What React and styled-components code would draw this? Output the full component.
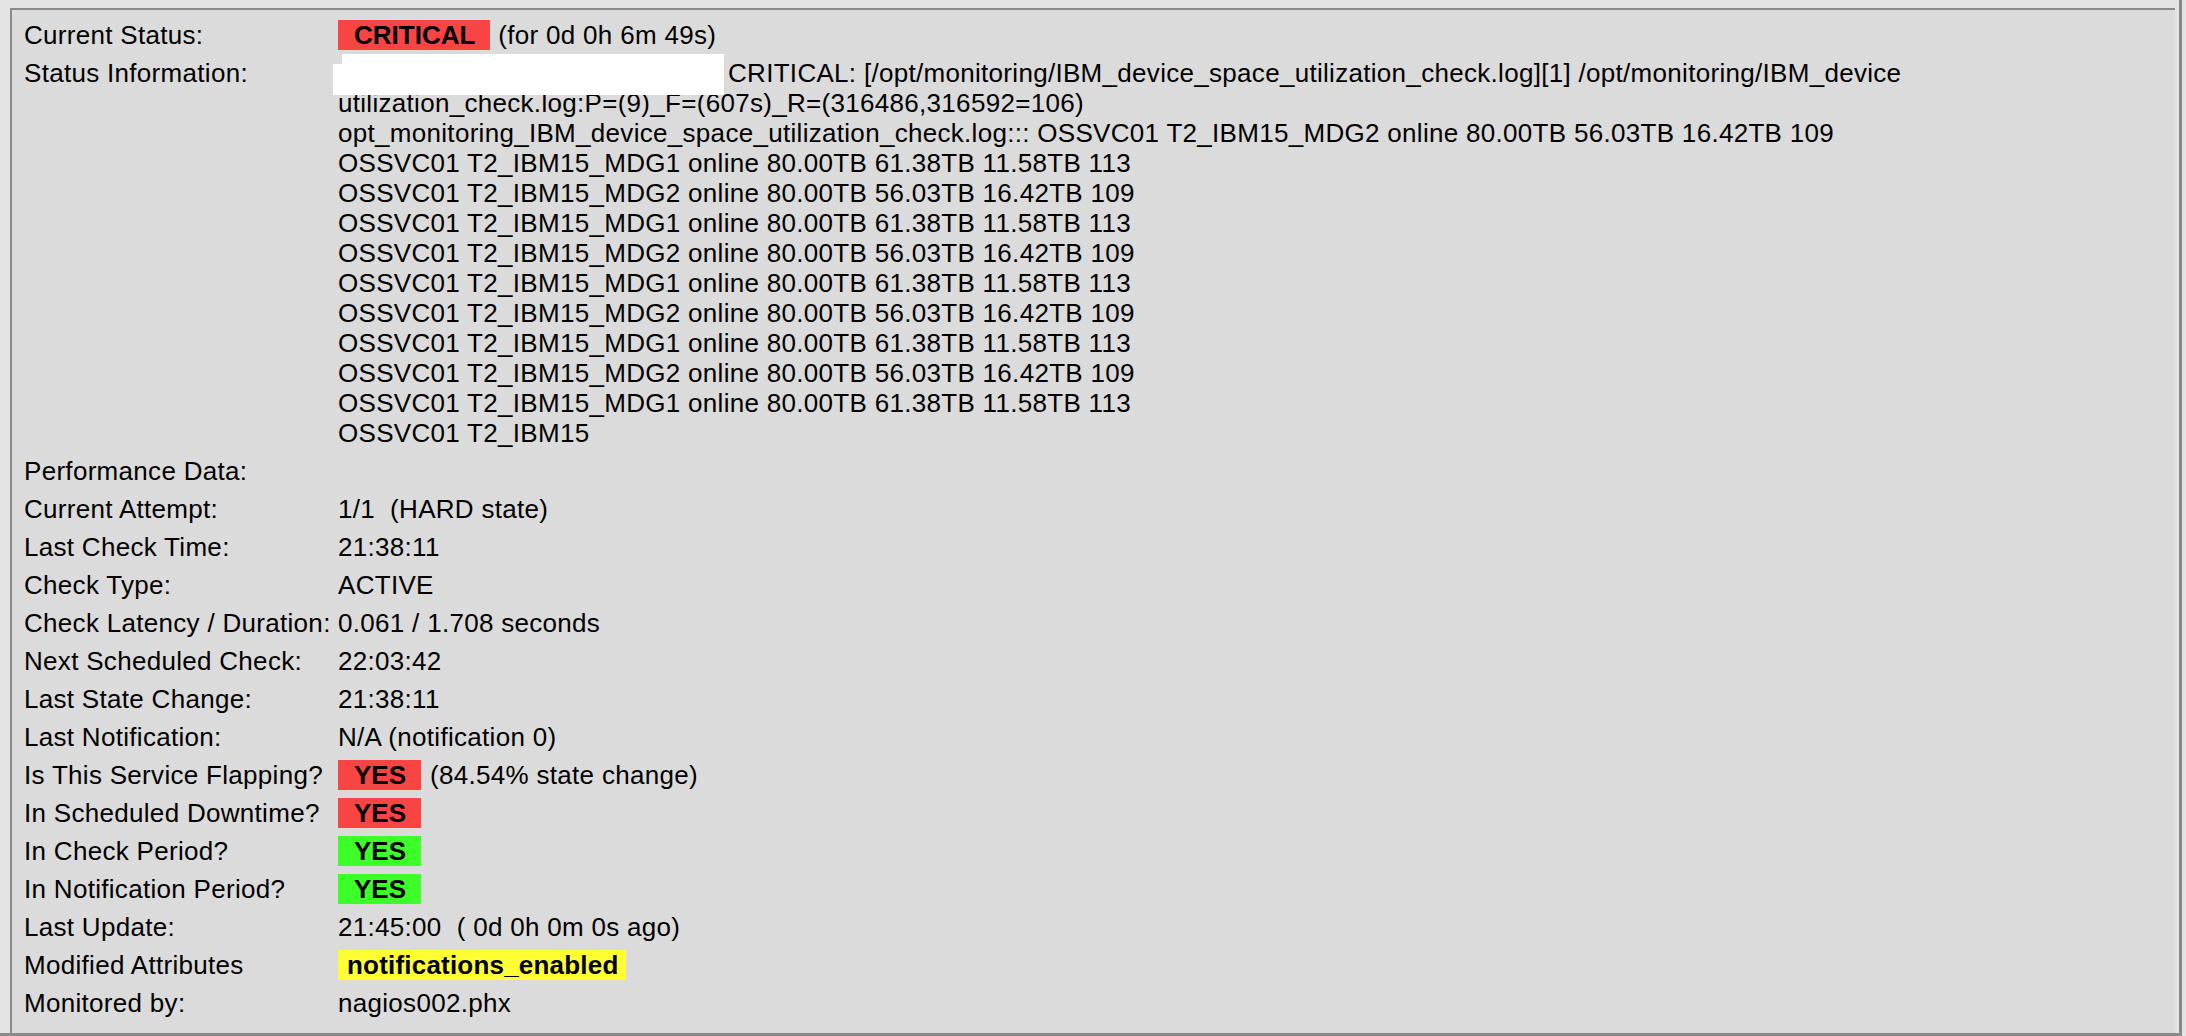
import { Fragment } from 'react';
import styled, { createGlobalStyle } from 'styled-components';

const GlobalStyle = createGlobalStyle`
  html, body {
    margin: 0;
    padding: 0;
    background: #e4e4e4;
  }
  body {
    font-family: "Liberation Sans", Arial, Helvetica, sans-serif;
    color: #000;
  }
`;

const Frame = styled.div`
  box-sizing: border-box;
  display: flex;
  width: 2182px;
  height: 1036px;
  padding: 8px 4px 0 10px;
  border-right: 3px solid #8a8a8a;
  border-bottom: 3px solid #8a8a8a;
  background: #e4e4e4;
`;

const InfoTable = styled.div`
  flex: 1;
  display: grid;
  grid-template-columns: 314px 1fr;
  grid-auto-rows: min-content;
  row-gap: 8px;
  align-content: start;
  padding: 10px 12px;
  border-top: 2px solid #8a8a8a;
  border-left: 2px solid #8a8a8a;
  background: #dbdbdb;
  font-size: 26px;
  line-height: 30px;
  letter-spacing: 0.3px;
`;

const Label = styled.div`
  white-space: nowrap;
`;

const Value = styled.div`
  display: flex;
  align-items: flex-start;
  gap: ${props => props.gap || 0}px;
  white-space: pre;
`;

const Lines = styled.div`
  white-space: pre;
`;

const Badge = styled.span`
  display: inline-block;
  height: 30px;
  padding: 0 15px 0 16px;
  font-weight: 700;
  letter-spacing: 0;
  background: ${props => props.color};
`;

const Attr = styled.span`
  display: inline-block;
  height: 30px;
  padding: 0 8px 0 9px;
  font-weight: 700;
  letter-spacing: 0.2px;
  background: #ffff33;
`;

const Redacted = styled.span`
  display: inline-block;
  position: relative;
  vertical-align: top;
  width: 391px;
  height: 30px;
  margin-left: -5px;
  margin-right: 4px;

  &::before,
  &::after {
    content: '';
    position: absolute;
    background: #fff;
  }
  &::before {
    top: -4px;
    left: 9px;
    right: 0;
    bottom: 0;
  }
  &::after {
    top: 6px;
    left: 0;
    right: 0;
    bottom: -7px;
  }
`;

const RED = '#f94444';
const GREEN = '#3cff2a';

const MDG1 = 'OSSVC01 T2_IBM15_MDG1 online 80.00TB 61.38TB 11.58TB 113';
const MDG2 = 'OSSVC01 T2_IBM15_MDG2 online 80.00TB 56.03TB 16.42TB 109';

const statusLines = [
  'utilization_check.log:P=(9)_F=(607s)_R=(316486,316592=106)',
  'opt_monitoring_IBM_device_space_utilization_check.log::: ' + MDG2,
  MDG1,
  MDG2,
  MDG1,
  MDG2,
  MDG1,
  MDG2,
  MDG1,
  MDG2,
  MDG1,
  'OSSVC01 T2_IBM15',
];

const rows = [
  { label: 'Performance Data:', value: '' },
  { label: 'Current Attempt:', value: '1/1  (HARD state)' },
  { label: 'Last Check Time:', value: '21:38:11' },
  { label: 'Check Type:', value: 'ACTIVE' },
  { label: 'Check Latency / Duration:', value: '0.061 / 1.708 seconds' },
  { label: 'Next Scheduled Check:', value: '22:03:42' },
  { label: 'Last State Change:', value: '21:38:11' },
  { label: 'Last Notification:', value: 'N/A (notification 0)' },
];

const ServiceState = () => {
  return (
    <>
      <GlobalStyle />
      <Frame>
        <InfoTable>
          <Label>Current Status:</Label>
          <Value gap={8}>
            <Badge color={RED}>CRITICAL</Badge>
            <span>(for 0d 0h 6m 49s)</span>
          </Value>

          <Label>Status Information:</Label>
          <Lines>
            <div>
              <Redacted />
              CRITICAL: [/opt/monitoring/IBM_device_space_utilization_check.log][1] /opt/monitoring/IBM_device
            </div>
            {statusLines.map((line, i) => (
              <div key={i}>{line}</div>
            ))}
          </Lines>

          {rows.map(row => (
            <Fragment key={row.label}>
              <Label>{row.label}</Label>
              <Value>{row.value}</Value>
            </Fragment>
          ))}

          <Label>Is This Service Flapping?</Label>
          <Value gap={9}>
            <Badge color={RED}>YES</Badge>
            <span>(84.54% state change)</span>
          </Value>

          <Label>In Scheduled Downtime?</Label>
          <Value>
            <Badge color={RED}>YES</Badge>
          </Value>

          <Label>In Check Period?</Label>
          <Value>
            <Badge color={GREEN}>YES</Badge>
          </Value>

          <Label>In Notification Period?</Label>
          <Value>
            <Badge color={GREEN}>YES</Badge>
          </Value>

          <Label>Last Update:</Label>
          <Value>21:45:00  ( 0d 0h 0m 0s ago)</Value>

          <Label>Modified Attributes</Label>
          <Value>
            <Attr>notifications_enabled</Attr>
          </Value>

          <Label>Monitored by:</Label>
          <Value>nagios002.phx</Value>
        </InfoTable>
      </Frame>
    </>
  );
};

export default ServiceState;
